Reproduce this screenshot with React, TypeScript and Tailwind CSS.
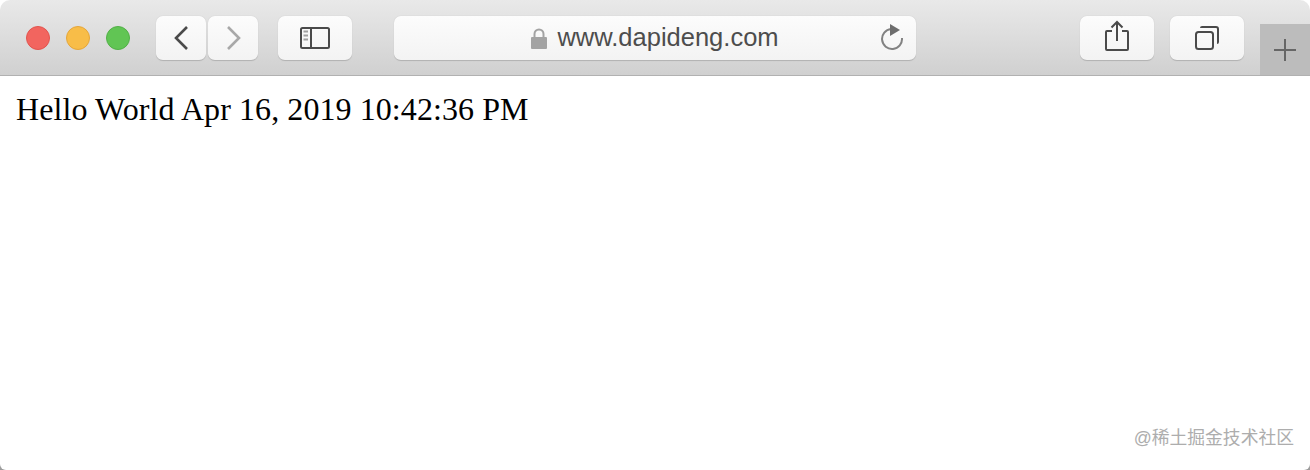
import React from "react"

function ToolButton({ className, children }: { className: string; children: React.ReactNode }) {
  return (
    <div className={`h-[45px] flex items-center justify-center rounded-[7px] bg-gradient-to-b from-[#fcfcfc] to-[#f3f3f3] border-b border-b-[#b4b4b4] shadow-[0_0_1px_#b8b8b8] ${className}`}>
      {children}
    </div>
  )
}

function Light({ className }: { className: string }) {
  return <div className={`w-6 h-6 rounded-full border ${className}`} />
}

export default function App() {
  return (
    <div className="w-[1310px] h-[470px] bg-gradient-to-b from-white from-90% to-[#9a9a9a]">
      <div className="w-full h-full flex flex-col bg-white rounded-t-[10px] rounded-b-[6px] overflow-hidden">
        <header className="h-[76px] shrink-0 flex bg-gradient-to-b from-[#e9e9e9] to-[#d0d0d0] border-b border-b-[#b1b1b1]">
          <div className="flex items-center gap-4 pl-[26px] pt-[1px] h-full">
            <Light className="bg-[#f2655f] border-[#e2544e]" />
            <Light className="bg-[#f8bd48] border-[#e5a63a]" />
            <Light className="bg-[#61c554] border-[#52b047]" />
          </div>
          <div className="flex gap-[2px] ml-[26px] pt-4">
            <ToolButton className="w-[50px]">
              <svg width="18" height="28" viewBox="0 0 18 28" fill="none" stroke="#4a4a4a" strokeWidth="2.6">
                <path d="M15 3 L4 14 L15 25" />
              </svg>
            </ToolButton>
            <ToolButton className="w-[50px]">
              <svg width="18" height="28" viewBox="0 0 18 28" fill="none" stroke="#a8a8a8" strokeWidth="2.6">
                <path d="M4 3 L15 14 L4 25" />
              </svg>
            </ToolButton>
          </div>
          <div className="ml-5 pt-4">
            <ToolButton className="w-[74px]">
              <svg width="30" height="24" viewBox="0 0 30 24" fill="none" stroke="#4a4a4a" strokeWidth="2">
                <rect x="1" y="2" width="28" height="20" rx="1.5" />
                <path d="M11 2 V22" />
                <path d="M3.5 5.5 H8 M3.5 9.5 H8 M3.5 13.5 H8" stroke="#a0a0a0" />
              </svg>
            </ToolButton>
          </div>
          <div className="ml-[42px] pt-4">
            <ToolButton className="w-[522px] relative">
              <svg width="16" height="21" viewBox="0 0 16 21" className="mr-[10px]">
                <path d="M3.5 9 V6 a4.5 4.5 0 0 1 9 0 V9" fill="none" stroke="#a3a3a3" strokeWidth="2" />
                <rect x="0" y="9" width="16" height="12" rx="1" fill="#a3a3a3" />
              </svg>
              <span className="font-['Liberation_Sans',sans-serif] text-[25.5px] leading-none text-[#4d4d4d]">www.dapideng.com</span>
              <svg width="24" height="26" viewBox="0 0 24 26" fill="none" className="absolute right-[12px] top-[8px]">
                <path d="M11 5 A10 10 0 1 0 22 14" stroke="#828282" strokeWidth="2" />
                <path d="M10 0 L20 6 L10 12 Z" fill="#6d6d6d" />
              </svg>
            </ToolButton>
          </div>
          <div className="ml-[164px] pt-4">
            <ToolButton className="w-[74px]">
              <svg width="24" height="32" viewBox="0 0 24 32" fill="none" stroke="#4a4a4a" strokeWidth="2" className="-mt-1">
                <path d="M7 11 H2 a1 1 0 0 0 -1 1 V29 a1 1 0 0 0 1 1 H22 a1 1 0 0 0 1 -1 V12 a1 1 0 0 0 -1 -1 H17" />
                <path d="M12 21 V2 M6.5 7.5 L12 2 L17.5 7.5" />
              </svg>
            </ToolButton>
          </div>
          <div className="ml-4 pt-4">
            <ToolButton className="w-[74px]">
              <svg width="24" height="24" viewBox="0 0 24 24" fill="none" stroke="#4a4a4a" strokeWidth="2">
                <rect x="1" y="6" width="17" height="17" rx="2.5" />
                <path d="M6 2 a1 1 0 0 1 1 -1 H21 a2 2 0 0 1 2 2 V16 a1 1 0 0 1 -1 1" />
              </svg>
            </ToolButton>
          </div>
          <div className="ml-4 mt-6 flex-1 bg-[#bcbcbc] flex items-center justify-center pt-[1px]">
            <svg width="24" height="24" viewBox="0 0 24 24" stroke="#666666" strokeWidth="2">
              <path d="M12 1 V23 M1 12 H23" />
            </svg>
          </div>
        </header>
        <main className="flex-1 flex flex-col">
          <p className="pl-4 pt-[14px] font-['Liberation_Serif',serif] text-[32px] leading-[38px] tracking-[0.08px] text-black">
            Hello World Apr 16, 2019 10:42:36 PM
          </p>
          <div className="mt-auto pb-[21px] pr-4 text-right font-['Liberation_Sans','Noto_Sans_CJK_SC',sans-serif] text-[17.8px] leading-[22px] text-[#adadad]">
            @稀土掘金技术社区
          </div>
        </main>
      </div>
    </div>
  )
}
